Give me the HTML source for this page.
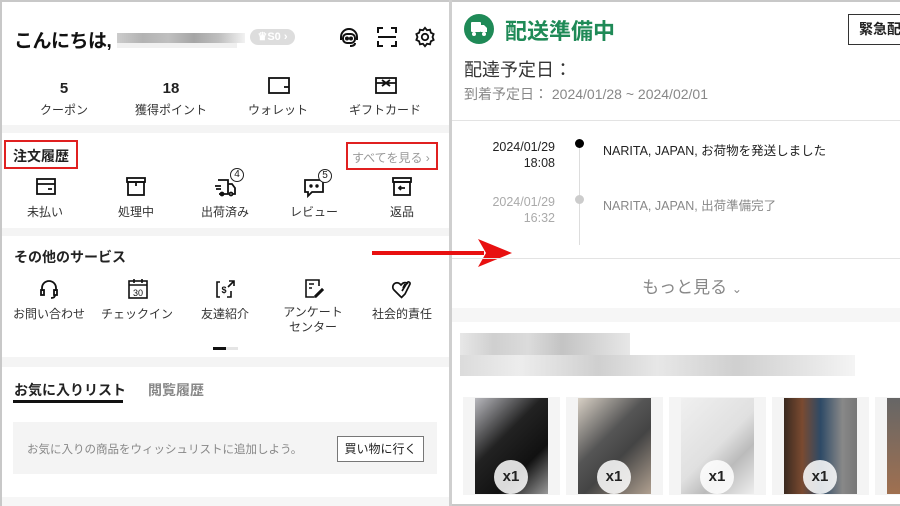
<!DOCTYPE html>
<html><head><meta charset="utf-8"><style>
*{margin:0;padding:0;box-sizing:border-box}
body{width:900px;height:506px;background:#fff;position:relative;overflow:hidden;font-family:"Liberation Sans","Noto Sans CJK JP",sans-serif;color:#222}
.a{position:absolute;white-space:nowrap}
.c{transform:translateX(-50%);text-align:center}
.band{position:absolute;background:#f4f4f4}
svg{position:absolute;overflow:visible}
.lbl{font-size:12px;color:#333}
</style></head><body>
<div style="position:absolute;left:0;top:0;width:900px;height:506px;border:2px solid #c8c8c8;border-right:none"></div>
<div style="position:absolute;left:449px;top:0;width:3px;height:506px;background:#cfcfcf"></div>

<div class="a" style="left:14px;top:26px;font-size:19px;font-weight:bold;color:#111;letter-spacing:-0.5px">こんにちは,</div>
<div style="position:absolute;left:117px;top:33px;width:128px;height:10px;background:linear-gradient(90deg,#bbb,#999 20%,#aaa 40%,#888 60%,#aaa 80%,#eee);opacity:.75"></div>
<div style="position:absolute;left:117px;top:43px;width:120px;height:5px;background:#f0f0f0"></div>
<div class="a" style="left:250px;top:29px;width:45px;height:16px;border-radius:8px;background:#ddd;color:#fff;font-size:11px;font-weight:bold;line-height:16px;text-align:center">♛S0 ›</div>
<svg style="left:338px;top:27px" width="22" height="22" viewBox="0 0 22 22" fill="none" stroke="#111" stroke-width="2"><path d="M3 13V10a8 8 0 0116 0v3"/><rect x="5" y="7" width="12" height="9" rx="4"/><circle cx="9" cy="11.5" r="1" fill="#111"/><circle cx="13" cy="11.5" r="1" fill="#111"/><path d="M17 16q0 3-5 3"/></svg>
<svg style="left:377px;top:27px" width="20" height="20" viewBox="0 0 20 20" fill="none" stroke="#111" stroke-width="2"><path d="M1 6V1h5M14 1h5v5M1 14v5h5M14 19h5v-5M1 10h18"/></svg>
<svg style="left:414px;top:26px" width="22" height="22" viewBox="0 0 24 24" fill="none" stroke="#111" stroke-width="2"><path d="M12 2l2.2 2.6 3.3-.6.9 3.3 3 1.5-1.2 3.2 1.2 3.2-3 1.5-.9 3.3-3.3-.6L12 22l-2.2-2.6-3.3.6-.9-3.3-3-1.5L3.8 12 2.6 8.8l3-1.5.9-3.3 3.3.6z"/><circle cx="12" cy="12" r="3.5"/></svg>

<div class="a c" style="left:64px;top:80px;font-size:15px;font-weight:bold">5</div>
<div class="a c" style="left:171px;top:80px;font-size:15px;font-weight:bold">18</div>
<svg style="left:268px;top:77px" width="22" height="18" fill="none" stroke="#111" stroke-width="1.8"><rect x="1" y="1" width="20" height="15"/><path d="M16 10h5"/></svg>
<svg style="left:375px;top:77px" width="22" height="18" fill="none" stroke="#111" stroke-width="1.8"><rect x="1" y="1" width="20" height="15"/><path d="M1 6h20M7 3l8 6M15 3l-8 6"/></svg>
<div class="a c lbl" style="left:64px;top:101px">クーポン</div>
<div class="a c lbl" style="left:171px;top:101px">獲得ポイント</div>
<div class="a c lbl" style="left:278px;top:101px">ウォレット</div>
<div class="a c lbl" style="left:385px;top:101px">ギフトカード</div>
<div class="band" style="left:2px;top:125px;width:447px;height:8px"></div>

<div style="position:absolute;left:4px;top:140px;width:74px;height:29px;border:2px solid #e02020"></div>
<div class="a" style="left:13px;top:146px;font-size:14px;font-weight:bold">注文履歴</div>
<div style="position:absolute;left:346px;top:142px;width:92px;height:28px;border:2px solid #e02020"></div>
<div class="a" style="left:352px;top:149px;font-size:12px;color:#999">すべてを見る ›</div>

<svg style="left:36px;top:178px" width="20" height="18" fill="none" stroke="#111" stroke-width="1.8"><rect x="1" y="1" width="18" height="15"/><path d="M1 6h18M12 11h4"/></svg>
<svg style="left:126px;top:177px" width="20" height="19" fill="none" stroke="#111" stroke-width="1.8"><rect x="1" y="1" width="18" height="4"/><rect x="2" y="5" width="16" height="13"/><path d="M10 5v4"/></svg>
<svg style="left:214px;top:178px" width="22" height="18" fill="none" stroke="#111" stroke-width="1.8"><path d="M4 2h10v14H5M14 6h4l3 4v6h-3"/><circle cx="8" cy="16" r="1.5"/><circle cx="17" cy="16" r="1.5"/><path d="M1 8h6M2 11h5"/></svg>
<div class="a" style="left:230px;top:168px;width:14px;height:14px;border:1.3px solid #222;border-radius:50%;font-size:10px;text-align:center;line-height:12px;background:#fff">4</div>
<svg style="left:304px;top:179px" width="20" height="18" fill="none" stroke="#111" stroke-width="1.8"><path d="M1 1h18v12H8l-4 4v-4H1z"/><circle cx="7" cy="7" r=".8" fill="#111"/><circle cx="13" cy="7" r=".8" fill="#111"/></svg>
<div class="a" style="left:318px;top:169px;width:14px;height:14px;border:1.3px solid #222;border-radius:50%;font-size:10px;text-align:center;line-height:12px;background:#fff">5</div>
<svg style="left:392px;top:177px" width="20" height="19" fill="none" stroke="#111" stroke-width="1.8"><rect x="1" y="1" width="18" height="4"/><rect x="2" y="5" width="16" height="13"/><path d="M7 11h6M9 9l-2 2 2 2"/></svg>
<div class="a c lbl" style="left:45px;top:203px">未払い</div>
<div class="a c lbl" style="left:136px;top:203px">処理中</div>
<div class="a c lbl" style="left:225px;top:203px">出荷済み</div>
<div class="a c lbl" style="left:314px;top:203px">レビュー</div>
<div class="a c lbl" style="left:402px;top:203px">返品</div>
<div class="band" style="left:2px;top:228px;width:447px;height:8px"></div>

<div class="a" style="left:14px;top:247px;font-size:14px;font-weight:bold">その他のサービス</div>
<svg style="left:40px;top:279px" width="18" height="20" fill="none" stroke="#111" stroke-width="1.8"><path d="M2 12V9a7 7 0 0114 0v3"/><rect x="1" y="11" width="3" height="5"/><rect x="14" y="11" width="3" height="5"/><path d="M15 16q0 3-4 3"/></svg>
<svg style="left:128px;top:278px" width="20" height="21" fill="none" stroke="#111" stroke-width="1.6"><rect x="1" y="3" width="18" height="17"/><path d="M1 7h18M6 1v4M14 1v4"/><text x="10" y="18" font-size="9" text-anchor="middle" fill="#111" stroke="none" font-family="Liberation Sans">30</text></svg>
<svg style="left:215px;top:279px" width="20" height="20" fill="none" stroke="#111" stroke-width="1.6"><path d="M5 3H2v15h3M12 18h4v-6M14 2h5v5M19 2l-6 6"/><text x="9" y="14" font-size="9" text-anchor="middle" fill="#111" stroke="none" font-weight="bold" font-family="Liberation Sans">$</text></svg>
<svg style="left:304px;top:278px" width="20" height="21" fill="none" stroke="#111" stroke-width="1.6"><path d="M15 8V2H2v17h8M5 6h5M5 10h3M11 18l7-7 1 1-7 7h-1z"/></svg>
<svg style="left:391px;top:278px" width="22" height="22" fill="none" stroke="#111" stroke-width="1.7"><path d="M10 19L3 12a4 4 0 016-6l1 1 1-1a4 4 0 016 0M11 13l5-8a1.5 1.5 0 013 1l-5 10-4 4M14 6l-2 4"/></svg>
<div class="a c lbl" style="left:49px;top:305px">お問い合わせ</div>
<div class="a c lbl" style="left:137px;top:305px">チェックイン</div>
<div class="a c lbl" style="left:225px;top:305px">友達紹介</div>
<div class="a c lbl" style="left:313px;top:305px;line-height:15px">アンケート<br>センター</div>
<div class="a c lbl" style="left:402px;top:305px">社会的責任</div>
<div style="position:absolute;left:213px;top:347px;width:13px;height:3px;background:#111"></div>
<div style="position:absolute;left:226px;top:347px;width:12px;height:3px;background:#e5e5e5"></div>
<div class="band" style="left:2px;top:357px;width:447px;height:10px"></div>

<div class="a" style="left:14px;top:380px;font-size:14px;font-weight:bold">お気に入りリスト</div>
<div style="position:absolute;left:13px;top:400px;width:110px;height:3px;background:#111"></div>
<div class="a" style="left:148px;top:380px;font-size:14px;color:#888;font-weight:bold">閲覧履歴</div>
<div style="position:absolute;left:13px;top:422px;width:424px;height:52px;background:#f4f4f4"></div>
<div class="a" style="left:27px;top:441px;font-size:11.5px;color:#888">お気に入りの商品をウィッシュリストに追加しよう。</div>
<div class="a" style="left:337px;top:436px;width:87px;height:26px;border:1px solid #777;background:#fff;font-size:12px;text-align:center;line-height:24px">買い物に行く</div>
<div class="band" style="left:2px;top:497px;width:447px;height:9px;background:#f6f6f6"></div>

<div style="position:absolute;left:372px;top:251px;width:112px;height:4px;background:#e81010"></div>
<svg style="left:478px;top:239px" width="34" height="28"><path d="M0 0L34 14L0 28L8 14z" fill="#e81010"/></svg>

<div style="position:absolute;left:464px;top:14px;width:30px;height:30px;border-radius:50%;background:#1f8a57"></div>
<svg style="left:470px;top:21px" width="18" height="16" fill="#fff"><rect x="1" y="1" width="10" height="10" rx="1"/><path d="M11 4h3l3 3v4h-6z"/><circle cx="4" cy="13" r="2"/><circle cx="14" cy="13" r="2"/></svg>
<div class="a" style="left:505px;top:14px;font-size:22px;font-weight:bold;color:#1f8a57">配送準備中</div>
<div class="a" style="left:848px;top:14px;width:60px;height:31px;border:1.5px solid #333;font-size:14px;font-weight:bold;line-height:28px;padding-left:10px">緊急配</div>
<div class="a" style="left:464px;top:56px;font-size:18px;color:#333">配達予定日：</div>
<div class="a" style="left:464px;top:84px;font-size:14px;color:#888">到着予定日： 2024/01/28 ~ 2024/02/01</div>
<div style="position:absolute;left:452px;top:120px;width:448px;height:1px;background:#e3e3e3"></div>

<div class="a" style="left:470px;top:139px;width:85px;text-align:right;font-size:12.5px;line-height:16px;color:#222">2024/01/29<br>18:08</div>
<div style="position:absolute;left:579px;top:143px;width:1px;height:102px;background:#ddd"></div>
<div style="position:absolute;left:575px;top:139px;width:9px;height:9px;border-radius:50%;background:#000"></div>
<div class="a" style="left:603px;top:140px;font-size:12.5px;color:#222">NARITA, JAPAN, お荷物を発送しました</div>
<div class="a" style="left:470px;top:194px;width:85px;text-align:right;font-size:12.5px;line-height:16px;color:#aaa">2024/01/29<br>16:32</div>
<div style="position:absolute;left:575px;top:195px;width:9px;height:9px;border-radius:50%;background:#ccc"></div>
<div class="a" style="left:603px;top:195px;font-size:12.5px;color:#888">NARITA, JAPAN, 出荷準備完了</div>
<div style="position:absolute;left:452px;top:258px;width:448px;height:1px;background:#e3e3e3"></div>
<div class="a c" style="left:692px;top:273px;font-size:17px;color:#888">もっと見る <span style="font-size:12px">⌄</span></div>
<div class="band" style="left:452px;top:308px;width:448px;height:14px;background:#f6f6f6"></div>

<div style="position:absolute;left:460px;top:333px;width:170px;height:22px;background:linear-gradient(90deg,#ddd,#bbb 20%,#ccc 40%,#aaa 60%,#ddd);opacity:.7"></div>
<div style="position:absolute;left:460px;top:355px;width:395px;height:21px;background:linear-gradient(90deg,#ccc,#e5e5e5 15%,#bbb 35%,#ddd 50%,#bbb 70%,#ddd 90%,#f0f0f0);opacity:.7"></div>

<div style="position:absolute;left:463px;top:397px;width:97px;height:98px;background:#f4f4f4"></div>
<div style="position:absolute;left:475px;top:398px;width:73px;height:96px;background:linear-gradient(135deg,#b8b8bd,#222 40%,#111 70%,#999)"></div>
<div style="position:absolute;left:566px;top:397px;width:97px;height:98px;background:#f4f4f4"></div>
<div style="position:absolute;left:578px;top:398px;width:73px;height:96px;background:linear-gradient(135deg,#d8d0c5,#555 40%,#444 60%,#b0a090)"></div>
<div style="position:absolute;left:669px;top:397px;width:97px;height:98px;background:#f4f4f4"></div>
<div style="position:absolute;left:681px;top:398px;width:73px;height:96px;background:linear-gradient(135deg,#f0f0f0,#e0e0e0 50%,#bbb 70%,#eee)"></div>
<div style="position:absolute;left:772px;top:397px;width:97px;height:98px;background:#f4f4f4"></div>
<div style="position:absolute;left:784px;top:398px;width:73px;height:96px;background:linear-gradient(90deg,#3a2a20,#7a4a30 25%,#2e4a66 50%,#888 80%,#777)"></div>
<div style="position:absolute;left:875px;top:397px;width:25px;height:98px;background:#f4f4f4"></div>
<div style="position:absolute;left:887px;top:398px;width:13px;height:96px;background:linear-gradient(#666,#a07050)"></div>
<div class="a c" style="left:511px;top:460px;width:34px;height:34px;border-radius:50%;background:rgba(255,255,255,.85);font-size:15px;font-weight:bold;line-height:34px">x1</div>
<div class="a c" style="left:614px;top:460px;width:34px;height:34px;border-radius:50%;background:rgba(255,255,255,.85);font-size:15px;font-weight:bold;line-height:34px">x1</div>
<div class="a c" style="left:717px;top:460px;width:34px;height:34px;border-radius:50%;background:rgba(255,255,255,.85);font-size:15px;font-weight:bold;line-height:34px">x1</div>
<div class="a c" style="left:820px;top:460px;width:34px;height:34px;border-radius:50%;background:rgba(255,255,255,.85);font-size:15px;font-weight:bold;line-height:34px">x1</div>
</body></html>
